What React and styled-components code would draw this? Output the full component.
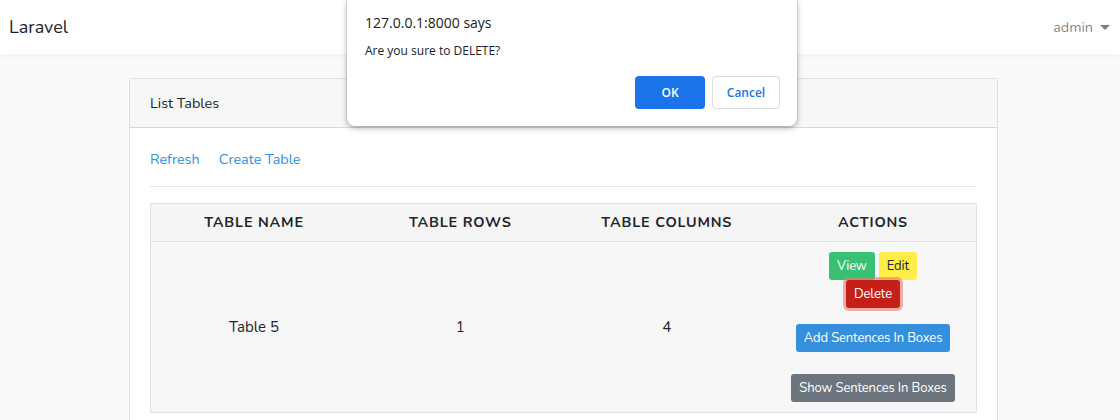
import styled, { createGlobalStyle } from "styled-components";

const GlobalStyle = createGlobalStyle`
    body {
        margin: 0;
        background: #f8fafc;
        font-family: Nunito, Lato, "Noto Sans", sans-serif;
        font-size: 14.4px;
        color: #212529;
    }
`;

const Navbar = styled.nav`
    height: 54px;
    background: #fff;
    box-shadow: 0 2px 4px rgba(0,0,0,0.04);
    display: flex;
    align-items: center;
    justify-content: space-between;
    padding: 0 10px 0 9px;
`;

const Brand = styled.a`
    font-size: 18px;
    color: #212529;
    text-decoration: none;
`;

const UserMenu = styled.span`
    display: flex;
    align-items: center;
    gap: 7px;
    color: rgba(0,0,0,0.5);
    font-size: 14.4px;

    &::after {
        content: "";
        border-top: 5px solid rgba(0,0,0,0.5);
        border-left: 5px solid transparent;
        border-right: 5px solid transparent;
    }
`;

const Main = styled.main`
    padding: 24px 0 0 129px;
`;

const Card = styled.div`
    width: 867px;
    background: #fff;
    border: 1px solid rgba(0,0,0,0.125);
    border-radius: 4px;
`;

const CardHeader = styled.div`
    padding: 12px 20px;
    line-height: 24px;
    background: #f7f7f7;
    border-bottom: 1px solid rgba(0,0,0,0.125);
`;

const CardBody = styled.div`
    padding: 20px;
`;

const Links = styled.div`
    display: flex;
    gap: 19px;
    line-height: 22px;
`;

const Link = styled.a`
    color: #3490dc;
    text-decoration: none;
`;

const Rule = styled.hr`
    margin: 16px 0 16px;
    border: 0;
    border-top: 1px solid rgba(0,0,0,0.1);
`;

const Table = styled.table`
    width: 100%;
    table-layout: fixed;
    border-collapse: collapse;
    border: 1px solid #dee2e6;
    text-align: center;
`;

const Th = styled.th`
    background: #f5f5f5;
    border-bottom: 1px solid #dee2e6;
    padding: 10px;
    font-weight: 700;
    letter-spacing: 0.8px;
    text-transform: uppercase;
    line-height: 17px;
`;

const Td = styled.td`
    background: #f7f7f7;
    border-bottom: 1px solid #dee2e6;
    padding: 10px;
    vertical-align: middle;
    font-size: 15px;
`;

const Actions = styled.div`
    display: flex;
    flex-direction: column;
    align-items: center;
`;

const ButtonRow = styled.div`
    display: flex;
    gap: 4px;
    margin-bottom: ${p => p.$gap || 0}px;
`;

const colors = {
    success: ["#38c172", "#fff"],
    warning: ["#ffed4a", "#212529"],
    danger: ["#c51f1a", "#fff"],
    primary: ["#3490dc", "#fff"],
    secondary: ["#6c757d", "#fff"],
};

const Button = styled.button`
    height: 28px;
    padding: 0 8px;
    border: none;
    border-radius: 3px;
    font-family: inherit;
    font-size: 13px;
    letter-spacing: -0.12px;
    background: ${p => colors[p.$variant][0]};
    color: ${p => colors[p.$variant][1]};
    box-shadow: ${p => p.$focus ? "0 0 0 3px rgba(230,120,120,0.6)" : "none"};
`;

const Dialog = styled.div`
    position: absolute;
    top: 0;
    left: 347px;
    width: 450px;
    height: 126px;
    box-sizing: border-box;
    background: #fff;
    border-radius: 0 0 8px 8px;
    box-shadow: 0 2px 6px rgba(0,0,0,0.3), 0 0 0 1px rgba(0,0,0,0.08);
    padding: 14px 17px 17px 18px;
    font-family: "Open Sans", "Noto Sans", sans-serif;
    display: flex;
    flex-direction: column;
`;

const DialogTitle = styled.div`
    font-size: 14px;
    color: #202124;
    line-height: 18px;
`;

const DialogMessage = styled.div`
    font-size: 12px;
    color: #202124;
    margin-top: 11px;
    line-height: 16px;
`;

const DialogButtons = styled.div`
    margin-top: auto;
    display: flex;
    justify-content: flex-end;
    gap: 7px;
`;

const DialogButton = styled.button`
    height: 33px;
    box-sizing: border-box;
    border-radius: 4px;
    font-family: inherit;
    font-size: 12px;
    font-weight: 600;
    width: ${p => p.$primary ? 70 : 68}px;
    background: ${p => p.$primary ? "#1a73e8" : "#fff"};
    color: ${p => p.$primary ? "#fff" : "#1a73e8"};
    border: ${p => p.$primary ? "none" : "1px solid #dadce0"};
`;

export default function App() {
    return (
        <>
            <GlobalStyle />
            <Navbar>
                <Brand>Laravel</Brand>
                <UserMenu>admin</UserMenu>
            </Navbar>
            <Main>
                <Card>
                    <CardHeader>List Tables</CardHeader>
                    <CardBody>
                        <Links>
                            <Link>Refresh</Link>
                            <Link>Create Table</Link>
                        </Links>
                        <Rule />
                        <Table>
                            <thead>
                                <tr>
                                    <Th>Table Name</Th>
                                    <Th>Table Rows</Th>
                                    <Th>Table Columns</Th>
                                    <Th>Actions</Th>
                                </tr>
                            </thead>
                            <tbody>
                                <tr>
                                    <Td>Table 5</Td>
                                    <Td>1</Td>
                                    <Td>4</Td>
                                    <Td>
                                        <Actions>
                                            <ButtonRow>
                                                <Button $variant="success">View</Button>
                                                <Button $variant="warning">Edit</Button>
                                            </ButtonRow>
                                            <ButtonRow $gap={16}>
                                                <Button $variant="danger" $focus>Delete</Button>
                                            </ButtonRow>
                                            <ButtonRow $gap={22}>
                                                <Button $variant="primary">Add Sentences In Boxes</Button>
                                            </ButtonRow>
                                            <ButtonRow>
                                                <Button $variant="secondary">Show Sentences In Boxes</Button>
                                            </ButtonRow>
                                        </Actions>
                                    </Td>
                                </tr>
                            </tbody>
                        </Table>
                    </CardBody>
                </Card>
            </Main>
            <Dialog>
                <DialogTitle>127.0.0.1:8000 says</DialogTitle>
                <DialogMessage>Are you sure to DELETE?</DialogMessage>
                <DialogButtons>
                    <DialogButton $primary>OK</DialogButton>
                    <DialogButton>Cancel</DialogButton>
                </DialogButtons>
            </Dialog>
        </>
    );
}
